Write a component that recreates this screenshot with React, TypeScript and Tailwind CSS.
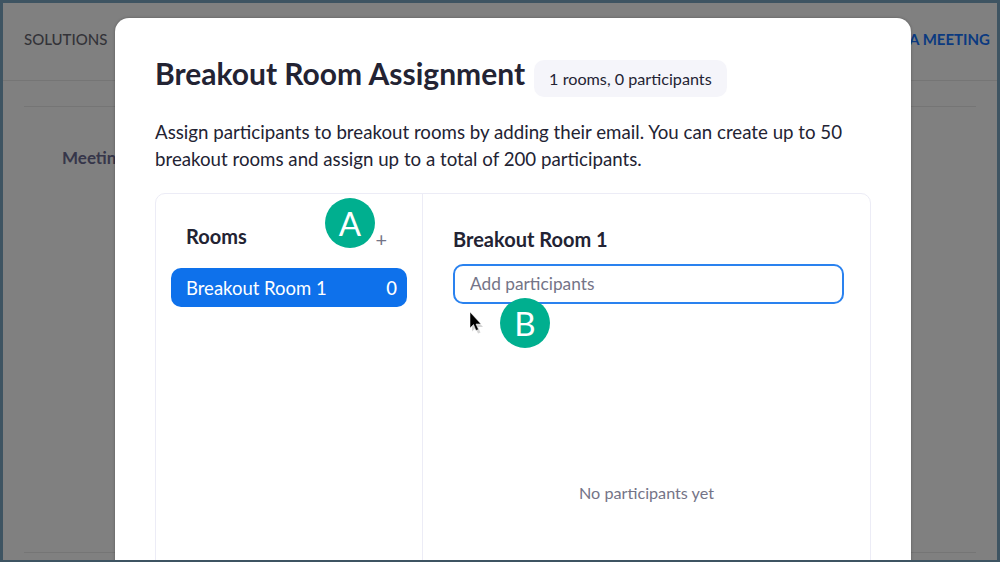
import { useState } from "react";

function Badge({ letter, className }: { letter: string; className: string }) {
  return (
    <div
      className={`absolute flex h-[50px] w-[50px] items-center justify-center rounded-full bg-[#00af8f] text-[33px] leading-none text-white ${className}`}
    >
      {letter}
    </div>
  );
}

function Cursor() {
  return (
    <svg className="absolute left-[465px] top-[308px]" width="16" height="24" viewBox="0 0 16 24">
      <path d="M3 2 L3 19 L6.5 15.5 L9 21 L11.5 20 L9 14.5 L14 14.5 Z" fill="#b8b8b8" opacity="0.6" transform="translate(1 1.5)" />
      <path d="M2 1 L2 17 L5.5 13.5 L8 19.5 L10.5 18.5 L8 13 L13 13 Z" fill="#000" stroke="#fff" strokeWidth="0.5" />
    </svg>
  );
}

export default function App() {
  const [value, setValue] = useState("");

  return (
    <div className="relative h-[562px] w-[1000px] overflow-hidden border-x-[3px] border-b-2 border-t-[3px] border-[#3e5462] bg-[#808080] font-['Lato',sans-serif]">
      {/* page behind the modal */}
      <header className="flex h-[78px] items-center justify-between border-b border-[#757575] pb-[4px] pl-[21px] pr-[7px] text-[15px]">
        <span className="font-medium text-[#333338]">SOLUTIONS</span>
        <span className="font-bold text-[#0b3a80]">A MEETING</span>
      </header>
      <div className="mx-[21px] mt-[25px] flex h-[447px] flex-col border-y border-[#757575] pl-[38px] pt-[38px]">
        <span className="text-[17px] font-bold text-[#36364a]">Meeting</span>
      </div>

      {/* modal */}
      <div className="absolute bottom-[-40px] left-[112px] top-[15px] flex w-[796px] flex-col rounded-t-[14px] bg-white px-10 pt-[42px] shadow-[0_0_3px_rgba(0,0,0,0.3)]">
        <div className="flex items-start gap-[9px]">
          <h1 className="-mt-[2px] text-[30px] font-bold leading-[30px] text-[#232333]">Breakout Room Assignment</h1>
          <span className="rounded-[10px] bg-[#f5f5fa] px-[15px] py-[7px] text-[16.2px] leading-[23px] text-[#232333]">
            1 rooms, 0 participants
          </span>
        </div>
        <p className="mt-[22px] whitespace-nowrap text-[18.7px] leading-[27px] text-[#232333]">
          Assign participants to breakout rooms by adding their email. You can create up to 50
          <br />
          breakout rooms and assign up to a total of 200 participants.
        </p>

        <div className="mt-[20px] flex flex-1 rounded-t-[10px] border border-[#ececf6]">
          <aside className="w-[267px] border-r border-[#ececf6] px-[15px] pt-[29px]">
            <div className="flex items-center justify-between pl-[15px] pr-[20px]">
              <h2 className="text-[20px] font-bold leading-[26px] text-[#232333]">Rooms</h2>
              <span className="mt-[5px] text-[20px] leading-none text-[#747487]">+</span>
            </div>
            <div className="mt-[19px] flex h-[39px] items-center justify-between rounded-[10px] bg-[#0e71eb] pl-[15px] pr-[10px] text-[18.5px] text-white">
              <span className="pt-[2px]">Breakout Room 1</span>
              <span className="pt-[2px] font-medium">0</span>
            </div>
          </aside>
          <section className="flex flex-1 flex-col pl-[30px] pr-[26px] pt-[33px]">
            <h2 className="text-[20px] font-bold leading-[24px] text-[#232333]">Breakout Room 1</h2>
            <input
              value={value}
              onChange={(e) => setValue(e.target.value)}
              placeholder="Add participants"
              className="mt-[13px] h-[40px] w-full rounded-[10px] border-2 border-[#2a82ef] px-[15px] pb-[2px] text-[17.3px] text-[#232333] outline-none placeholder:text-[#747487]"
            />
            <p className="mt-[178px] pr-[4px] text-center text-[16.2px] leading-[22px] text-[#747487]">No participants yet</p>
          </section>
        </div>
      </div>

      <Badge letter="A" className="left-[322px] top-[195px]" />
      <Badge letter="B" className="left-[497px] top-[295px]" />
      <Cursor />
    </div>
  );
}
